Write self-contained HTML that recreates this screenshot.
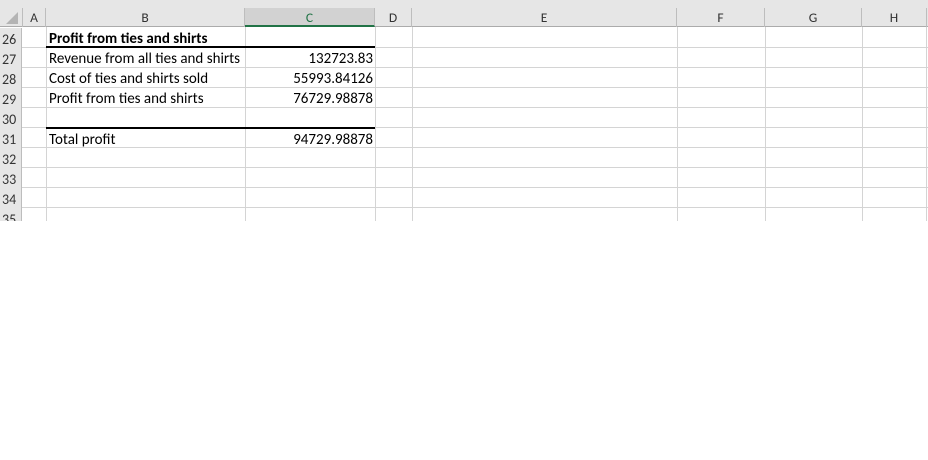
<!DOCTYPE html><html><head><style>
body{margin:0;width:928px;height:460px;background:#fff;position:relative;overflow:hidden;font-family:Calibri,"Carlito","Liberation Sans",sans-serif;font-size:15px;}
div{position:absolute;box-sizing:border-box;}
.hd{top:8px;height:19px;border-right:1px solid #bdbdbd;text-align:center;line-height:20px;color:#333;font-size:13.5px;}
.rn{left:0;width:22px;height:20px;line-height:23px;text-align:left;padding-left:2px;color:#333;font-size:14px;border-right:1px solid #bdbdbd;background:#e6e6e6;overflow:hidden;}
.vl{top:27px;height:194px;width:1px;background:#d4d4d4;}
.hl{left:22px;width:906px;height:1px;background:#d4d4d4;}
.t{height:20px;line-height:23px;color:#000;white-space:nowrap;}
</style></head><body>
<div style="left:0;top:0;width:928px;height:27px;background:#e6e6e6;border-bottom:1px solid #ababab"></div>
<div style="left:6px;top:12px;width:0;height:0;border-left:12px solid transparent;border-bottom:12px solid #b4b4b4"></div>
<div class="hd" style="left:0;width:23px;top:8px"></div>
<div class="hd" style="left:23px;width:23px">A</div>
<div class="hd" style="left:46px;width:199px">B</div>
<div class="hd" style="left:245px;width:130px;background:#d2d2d2;color:#217346;border-bottom:2px solid #217346;height:19px;line-height:19px">C</div>
<div class="hd" style="left:375px;width:37px">D</div>
<div class="hd" style="left:412px;width:265px">E</div>
<div class="hd" style="left:677px;width:88px">F</div>
<div class="hd" style="left:765px;width:97px">G</div>
<div class="hd" style="left:862px;width:65px">H</div>
<div style="left:0;top:28px;width:22px;height:193px;background:#e6e6e6;border-right:1px solid #bdbdbd"></div>
<div class="rn" style="top:28px">26</div>
<div class="rn" style="top:48px">27</div>
<div class="rn" style="top:68px">28</div>
<div class="rn" style="top:88px">29</div>
<div class="rn" style="top:108px">30</div>
<div class="rn" style="top:128px">31</div>
<div class="rn" style="top:148px">32</div>
<div class="rn" style="top:168px">33</div>
<div class="rn" style="top:188px">34</div>
<div class="rn" style="top:208px;height:13px">35</div>
<div class="vl" style="left:46px"></div><div class="vl" style="left:245px"></div><div class="vl" style="left:375px"></div><div class="vl" style="left:412px"></div><div class="vl" style="left:677px"></div><div class="vl" style="left:765px"></div><div class="vl" style="left:862px"></div><div class="vl" style="left:926px"></div>
<div class="hl" style="top:47px"></div><div class="hl" style="top:67px"></div><div class="hl" style="top:87px"></div><div class="hl" style="top:107px"></div><div class="hl" style="top:127px"></div><div class="hl" style="top:147px"></div><div class="hl" style="top:167px"></div><div class="hl" style="top:187px"></div><div class="hl" style="top:207px"></div>
<div style="left:46px;top:46px;width:329px;height:2px;background:#000"></div>
<div style="left:46px;top:127px;width:329px;height:2px;background:#000"></div>
<div class="t" style="left:49px;top:28px;font-weight:bold">Profit from ties and shirts</div>
<div class="t" style="left:49px;top:48px">Revenue from all ties and shirts</div>
<div class="t" style="left:49px;top:68px">Cost of ties and shirts sold</div>
<div class="t" style="left:49px;top:88px">Profit from ties and shirts</div>
<div class="t" style="left:49px;top:129px">Total profit</div>
<div class="t" style="left:245px;width:128px;text-align:right;top:48px">132723.83</div>
<div class="t" style="left:245px;width:128px;text-align:right;top:68px">55993.84126</div>
<div class="t" style="left:245px;width:128px;text-align:right;top:88px">76729.98878</div>
<div class="t" style="left:245px;width:128px;text-align:right;top:129px">94729.98878</div>
<div style="left:0;top:221px;width:928px;height:239px;background:#fff"></div>
</body></html>
